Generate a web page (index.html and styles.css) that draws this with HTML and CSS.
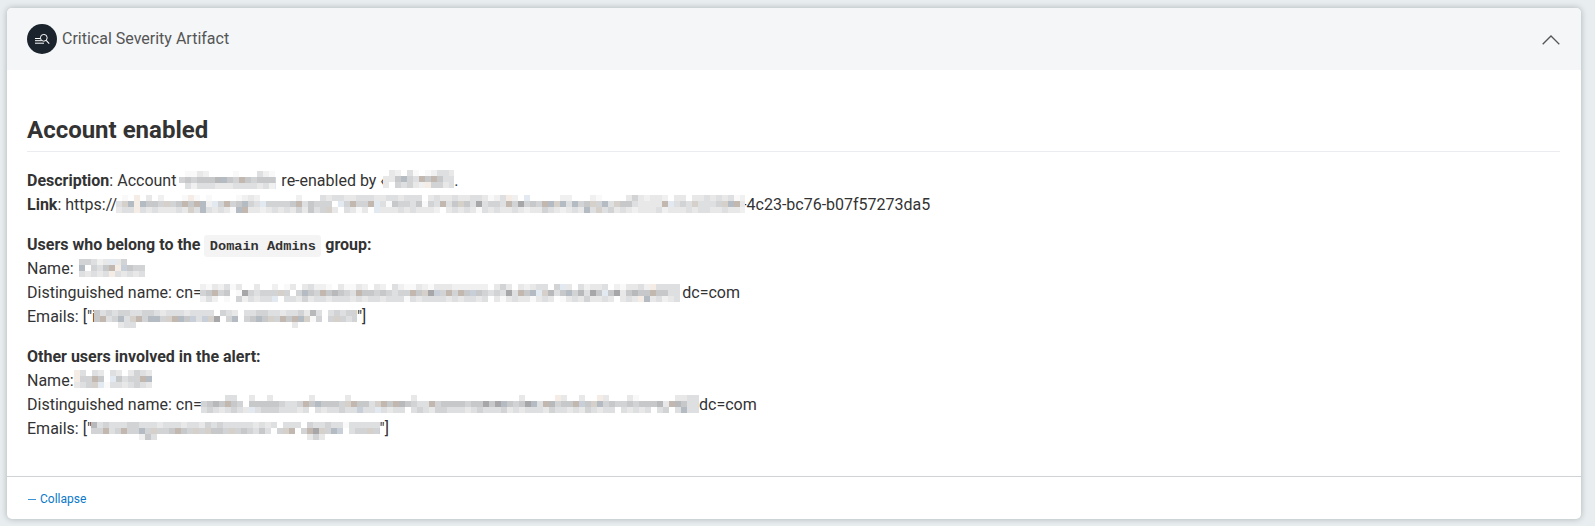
FILE: index.html
```html
<!DOCTYPE html>
<html lang="en">
<head>
<meta charset="utf-8">
<title>Critical Severity Artifact</title>
<link rel="stylesheet" href="styles.css">
</head>
<body>
<section class="card">
  <header class="card-header">
    <svg class="badge" width="30" height="30" viewBox="0 0 30 30" fill="none">
      <circle cx="15" cy="15" r="15" fill="#1b242c"/>
      <path d="M8 14.5h5M8 16.7h6.5M8 19.2h9" stroke="#fff" stroke-width="1"/>
      <circle cx="16.8" cy="13.8" r="3.4" stroke="#fff" stroke-width="1"/>
      <path d="M19.2 16.4l3 3.2" stroke="#fff" stroke-width="1.1"/>
    </svg>
    <span class="card-title">Critical Severity Artifact</span>
    <svg class="chevron" width="18" height="10" viewBox="0 0 18 10" fill="none">
      <path d="M.7 9.2L9 1l8.3 8.2" stroke="#555" stroke-width="1.3"/>
    </svg>
  </header>
  <div class="card-body">
    <h2>Account enabled</h2>
    <p><b>Description</b>: Account <i class="mosaic m-account" data-name="account"></i><span>re-enabled by </span><span class="clip">‹</span><i class="mosaic m-actor" data-name="actor"></i>.<br>
    <b>Link</b>: https://<i class="mosaic m-link" data-name="link"></i>-4c23-bc76-b07f57273da5</p>
    <p><b>Users who belong to the <code>Domain Admins</code> group:</b><br>
    Name: <i class="mosaic m-name1" data-name="name1"></i><br>
    Distinguished name: cn=<i class="mosaic m-dn1" data-name="dn1"></i>dc=com<br>
    Emails: ["i<i class="mosaic m-mail1" data-name="mail1"></i>"]</p>
    <p><b>Other users involved in the alert:</b><br>
    Name:<i class="mosaic m-name2" data-name="name2"></i><br>
    Distinguished name: cn=<i class="mosaic m-dn2" data-name="dn2"></i>dc=com<br>
    Emails: ["<i class="mosaic m-mail2" data-name="mail2"></i>"]</p>
  </div>
  <footer class="card-footer"><a class="collapse"><span class="dash"></span>Collapse</a></footer>
</section>
<script src="mosaic.js"></script>
</body>
</html>
```
FILE: styles.css
```css
* { box-sizing: border-box; }
body {
  margin: 0;
  padding: 8px 14px 7px 7px;
  height: 526px;
  overflow: hidden;
  background: #e8edef;
  color: #333;
  font: 16px/24px Roboto, sans-serif;
}
.card {
  display: flex;
  flex-direction: column;
  height: 511px;
  background: #fff;
  border-radius: 5px;
  box-shadow: 0 0 6px rgba(0, 30, 30, .27);
  overflow: hidden;
}
.card-header {
  display: flex;
  flex: none;
  align-items: center;
  height: 62px;
  padding: 0 21px 0 20px;
  background: #f4f6f8;
  color: #555;
}
.card-title { margin-left: 5px; }
.chevron { margin: 2px 0 0 auto; }
.card-body { flex: none; height: 406px; padding: 20px 21px 0 20px; }
h2 {
  margin: 25px 0 17px;
  padding-bottom: 6px;
  border-bottom: 1px solid #eaecef;
  font-size: 24px;
  font-weight: 700;
  line-height: 30px;
}
p { margin: 0 0 16px; height: 96px; white-space: nowrap; }
h2 + p { height: 48px; }
code {
  display: inline-block;
  height: 22px;
  margin-top: 2px;
  padding: 0 5.44px;
  vertical-align: top;
  background: #f4f4f4;
  border-radius: 3px;
  font: 700 13.6px/24px "Liberation Mono", monospace;
}
.mosaic { display: inline-block; position: relative; height: 18px; margin-top: 2px; vertical-align: top; }
.mosaic svg { display: block; }
.m-account { width: 97px; margin: 2px 5px 0 -1px; }
.m-actor { width: 71px; margin: 1px 0 0 -1px; }
.m-link { width: 629px; margin-left: -1px; margin-right: -3px; }
.m-name1 { width: 66px; margin-left: 2px; }
.m-dn1 { width: 482px; margin: 3px 0 0 -1.5px; }
.m-mail1 { width: 263px; margin: 5px 0 0 -2px; }
.m-name2 { width: 78px; margin-top: 1px; }
.m-dn2 { width: 498px; margin-left: -.7px; }
.m-mail2 { width: 289px; margin: 5px 0 0 -1.5px; }
.clip { display: inline-block; width: 4px; }
.card-footer {
  flex: 1;
  padding: 10px 20px 0;
  border-top: 1px solid #cfd3d6;
  font-size: 12px;
}
.collapse { display: flex; align-items: center; color: #0b79ca; }
.dash { width: 8px; height: 1px; margin: 1px 4px 0 1px; background: #3b94d6; }
```
FILE: mosaic.js
```js
// Each character is one 6px cell; rows run top to bottom.
const palette = {
  1: '#f9f9f9', 2: '#f0f0f0', 3: '#e8e8e9', 4: '#dedfe0', 5: '#d2d3d4',
  6: '#c6c8c9', 7: '#b8b9bb', 8: '#a7a6a9', a: '#c3b8b0', b: '#b5bbc3',
  c: '#f5ece5', d: '#e3e9f1', e: '#d6d0cb', f: '#c8cfd8'
};
const mosaics = {
  account: ['.1132....1...421', '5656667b65a656665', '.424443334444342d'],
  actor: ['.32.41.12443', '336b54a6a644', '3.54532c5534'],
  link: [
    '.1.c.3.2...1c1.1....1232......2...43443344433443444.3433433443124c2.d.....22...21....3532332.33.334343412',
    '4ebcb665e56a6ab2d5a56b54d55556a46555.d5a55ad4165546154a46e6484554a58565abeb4b56e5b4e6643333ad454e4445eba3',
    '344c43433343e4b43431ba3323434353645e3.4313.d3334343332.34343143433432335432343b4e453432333423334344334332'
  ],
  name1: ['55423d35...', 'b.546acf655', '43434c43434'],
  dn1: [
    '2132413..3..2.13.34221.31132.32.4211321333222222.353.32344.5d3.42334.213342c4444',
    '56a56.1854555e5.5b65a67654a66565455a6e8f5a5a6f6545484a6bde746b57486d6836766a6644',
    '242.1.524344d.4435344344434344344414344443434434.3134331343.134353343.343cb34234'
  ],
  mail1: ['64545544554344434444.543.4455443445374.45455', '6a45b4ea5bb5eab6f4fe8.5b.56b6e5a6abe15.5e545', '....344..........................3..........'],
  name2: ['c4.43.43.3543', 'c55a6.d6455ab5', '345ed14434543'],
  dn2: [
    '....44..3..3......3.....3..........3.................3.....c3..3..c3...31......3344',
    '5676a65.666665445a6b6665ea664ea6a76544a56666566868b6568b4a7566af6eb56556566673a7644',
    '45434543d455544434.4344544f44d4344.4543554443454445343444354434354344.43434.45.4b44'
  ],
  mail2: ['7454445544434443443545444443434.444.5445441444444', '55a45a55b5e556a65e5e665e565464.5ea.5a8e5bf.455e5f', '........264.........................353..........']
};
document.querySelectorAll('.mosaic').forEach(el => {
  const rows = mosaics[el.dataset.name];
  const rects = rows.map((row, y) => [...row].map((ch, x) =>
    palette[ch] ? `<rect x="${x * 6}" y="${y * 6}" width="6" height="6" fill="${palette[ch]}"/>` : ''
  ).join('')).join('');
  el.innerHTML = `<svg width="100%" height="18" shape-rendering="crispEdges">${rects}</svg>`;
});
```
